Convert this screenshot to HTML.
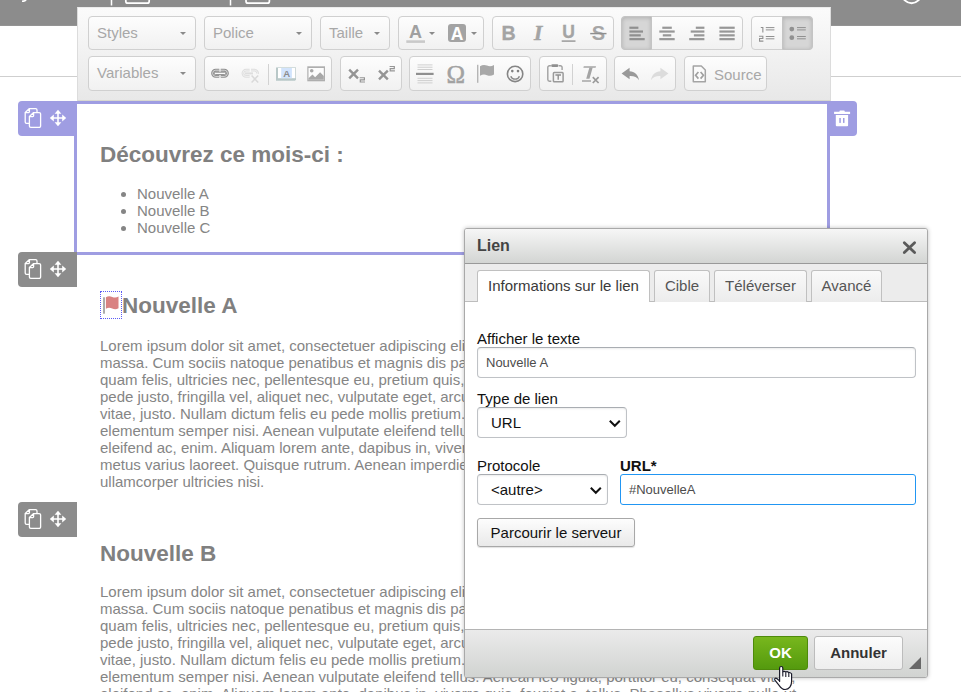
<!DOCTYPE html>
<html lang="fr">
<head>
<meta charset="utf-8">
<title>Lien</title>
<style>
*{box-sizing:border-box}
html,body{margin:0;padding:0}
body{width:961px;height:692px;overflow:hidden;position:relative;background:#fff;font-family:"Liberation Sans",sans-serif;font-size:15px;color:#858585}
.abs{position:absolute}
#topbar{left:0;top:0;width:961px;height:26px;background:#8c8c8c;border-bottom:1px solid #949494}
#hr{left:0;top:76px;width:961px;height:1px;background:#cfcfcf}
/* toolbar */
#tb{left:77px;top:7px;width:754px;height:94px;background:linear-gradient(#fbfbfb,#e8e8e8);border:1px solid #dcdcdc;border-top-color:#ececec;border-bottom-color:#d8d8d0}
.grp{position:absolute;height:34px;border:1px solid #d0d0d0;border-radius:4px;background:linear-gradient(#fdfdfd,#f1f1f1)}
.combo{position:absolute;font-size:15px;color:#a8a8a8;line-height:34px;white-space:nowrap}
.act{position:absolute;background:#d6d6d6;border:1px solid #c4c4c4;box-shadow:inset 0 1px 4px rgba(0,0,0,.18)}
.sep{position:absolute;width:1px;height:21px;background:#d2d2d2}
.arr{position:absolute;width:0;height:0;border-left:3px solid transparent;border-right:3px solid transparent;border-top:3px solid #8a8a8a}
/* handles */
.handle{width:59px;height:35px;border-radius:4px 0 0 4px}
.lav{background:#9f9de2}
.gry{background:#8c8c8c}
#editor{left:74px;top:101px;width:756px;height:154px;border:3px solid #9f9de2;background:#fff}
#trash{left:827px;top:101px;width:30px;height:35px;border-radius:0 4px 4px 0}
h2{position:absolute;margin:0;font-size:22.5px;font-weight:bold;color:#808080;white-space:nowrap;line-height:26px}
.p{position:absolute;left:100px;white-space:nowrap;line-height:17px;color:#858585}
ul{position:absolute;margin:0;padding:0;left:137px;top:185px;line-height:17px;list-style:none}
ul li{position:relative}
ul li:before{content:"";position:absolute;left:-16px;top:7px;width:5px;height:5px;border-radius:50%;background:#858585}
/* dialog */
#dlg{left:464px;top:228px;width:464px;height:450px;border:1px solid #a9a9a9;border-radius:3px;background:#fff;box-shadow:0 0 4px rgba(0,0,0,.25);color:#111}
#dtitle{left:0;top:0;width:462px;height:35px;background:linear-gradient(#f6f6f6,#d3d5d3);border-bottom:1px solid #999;border-radius:2px 2px 0 0;font-weight:bold;font-size:16px;color:#444;line-height:33px;padding-left:12px}
#dtabs{left:0;top:35px;width:462px;height:38px;background:#ececec;border-bottom:1px solid #bdbdbd}
.tab{position:absolute;top:6px;height:32px;border:1px solid #c0c0c0;border-bottom:none;border-radius:3px 3px 0 0;background:linear-gradient(#f9f9f9,#ececec);font-size:15px;color:#555;line-height:30px;text-align:center}
.tab.sel{background:#fff;color:#3a3a3a;height:32px;box-shadow:0 1px 0 #fff}
.lbl{position:absolute;font-size:15px;color:#111;line-height:17px;white-space:nowrap}
.inp{position:absolute;height:31px;border:1px solid #bfc2c6;border-top-color:#a9adb2;border-radius:4px;background:#fff;font-size:13px;color:#4c4c4c;line-height:29px;padding-left:8px;box-shadow:inset 0 1px 2px rgba(0,0,0,.08)}
.sel2{position:absolute;height:31px;border:1px solid #bfc2c6;border-top-color:#a9adb2;box-shadow:inset 0 1px 2px rgba(0,0,0,.08);border-radius:4px;background:#fff;font-size:15px;color:#111;line-height:29px;padding-left:13px}
#dfoot{left:0;top:400px;width:462px;height:48px;background:linear-gradient(#ebebeb,#d1d3d1);border-top:1px solid #b4b4b4;border-radius:0 0 2px 2px}
.chev{position:absolute;right:4px;top:11px}
.btn{position:absolute;height:34px;border-radius:3px;font-weight:bold;font-size:15px;text-align:center;line-height:32px}
</style>
</head>
<body>
<div id="topbar" class="abs"></div><svg class="abs" style="left:0;top:0" width="961" height="25" viewBox="0 0 961 25"><g fill="none" stroke="#fff" stroke-width="1.700"><path d="M111.500 -1v6.500M230.500 -1v6.500" stroke-width="1.500"/><rect x="125.800" y="-10" width="23.400" height="13.200" rx="2"/><rect x="246" y="-10" width="23.400" height="13.200" rx="2"/><circle cx="911.600" cy="-6.300" r="9.500" stroke-width="2"/><path d="M26 -1q0 2.200-4 2.200" stroke-width="1.600"/></g></svg>
<div id="hr" class="abs"></div>

<!-- page content -->
<div class="abs handle lav" style="left:18px;top:101px"></div><svg class="abs" style="left:18px;top:101px" width="59" height="35" viewBox="0 0 59 35"><g fill="none" stroke="#fff" stroke-width="1.300" stroke-linejoin="round"><path d="M11.600 7.600h6a1.400 1.400 0 0 1 1.400 1.400v2.400M11.200 22.400h-2.600a1.400 1.400 0 0 1-1.400-1.400v-9.600l4.200-3.800v3.200a.8.800 0 0 1-.8.800h-3.200"/><path d="M15.600 11.600h5.600a1.400 1.400 0 0 1 1.400 1.400v12a1.400 1.400 0 0 1-1.400 1.400h-8.400a1.400 1.400 0 0 1-1.400-1.400v-9.600l4.200-3.800v3.200a.8.800 0 0 1-.8.800h-3.200"/></g><path d="M40 8.800l3.400 4h-2.600v3.400h3.400v-2.600l4 3.400-4 3.400v-2.600h-3.400v3.400h2.600l-3.400 4-3.400-4h2.600v-3.400h-3.400v2.600l-4-3.400 4-3.400v2.600h3.400v-3.400h-2.600z" fill="#fff"/></svg>
<div class="abs lav" id="trash"></div><svg class="abs" style="left:827px;top:101px" width="30" height="35" viewBox="0 0 30 35"><path d="M7.100 10.800h5.200l.6-1.400h4.400l.6 1.400h5.200v2.200h-16zM8.800 13.900h12.300v10.300a1 1 0 0 1-1 1h-10.300a1 1 0 0 1-1-1z" fill="#fff"/><rect x="12.300" y="17" width="1.500" height="4.900" fill="#9f9de2"/><rect x="16" y="17" width="1.500" height="4.900" fill="#9f9de2"/></svg>
<div id="editor" class="abs"></div>
<h2 style="left:100px;top:142px">Découvrez ce mois-ci :</h2>
<ul><li>Nouvelle A</li><li>Nouvelle B</li><li>Nouvelle C</li></ul>

<div class="abs handle gry" style="left:18px;top:252px"></div><svg class="abs" style="left:18px;top:252px" width="59" height="35" viewBox="0 0 59 35"><g fill="none" stroke="#fff" stroke-width="1.300" stroke-linejoin="round"><path d="M11.600 7.600h6a1.400 1.400 0 0 1 1.400 1.400v2.400M11.200 22.400h-2.600a1.400 1.400 0 0 1-1.400-1.400v-9.600l4.200-3.800v3.200a.8.800 0 0 1-.8.800h-3.200"/><path d="M15.600 11.600h5.600a1.400 1.400 0 0 1 1.400 1.400v12a1.400 1.400 0 0 1-1.400 1.400h-8.400a1.400 1.400 0 0 1-1.400-1.400v-9.600l4.200-3.800v3.200a.8.800 0 0 1-.8.800h-3.200"/></g><path d="M40 8.800l3.400 4h-2.600v3.400h3.400v-2.600l4 3.400-4 3.400v-2.600h-3.400v3.400h2.600l-3.400 4-3.400-4h2.600v-3.400h-3.400v2.600l-4-3.400 4-3.400v2.600h3.400v-3.400h-2.600z" fill="#fff"/></svg>
<!--ANCHOR--><div class="abs" style="left:100px;top:291px;width:22px;height:28px;border:1px dotted #5c5cf6"></div><svg class="abs" style="left:100px;top:291px" width="22" height="28" viewBox="0 0 22 28"><rect x="3.100" y="6.300" width="1.800" height="16.400" fill="#a3a3a3"/><path d="M5.900 6.200c2.200-1.300 4.200-1.100 6.300-.3s4.100 1 6.300-.3v11.600c-2.200 1.300-4.200 1.100-6.300.3s-4.100-1-6.300.3z" fill="#d98282"/></svg><h2 style="left:122px;top:293px">Nouvelle A</h2>
<div class="p" style="top:337px">Lorem ipsum dolor sit amet, consectetuer adipiscing elit. Aenean commodo ligula eget dolor. Aenean<br>massa. Cum sociis natoque penatibus et magnis dis parturient montes, nascetur ridiculus mus. Donec<br>quam felis, ultricies nec, pellentesque eu, pretium quis, sem. Nulla consequat massa quis enim. Donec<br>pede justo, fringilla vel, aliquet nec, vulputate eget, arcu. In enim justo, rhoncus ut, imperdiet a, venenatis<br>vitae, justo. Nullam dictum felis eu pede mollis pretium. Integer tincidunt. Cras dapibus. Vivamus<br>elementum semper nisi. Aenean vulputate eleifend tellus. Aenean leo ligula, porttitor eu, consequat vitae,<br>eleifend ac, enim. Aliquam lorem ante, dapibus in, viverra quis, feugiat a, tellus. Phasellus viverra nulla ut<br>metus varius laoreet. Quisque rutrum. Aenean imperdiet. Etiam ultricies nisi vel augue. Curabitur<br>ullamcorper ultricies nisi.</div>

<div class="abs handle gry" style="left:18px;top:502px"></div><svg class="abs" style="left:18px;top:502px" width="59" height="35" viewBox="0 0 59 35"><g fill="none" stroke="#fff" stroke-width="1.300" stroke-linejoin="round"><path d="M11.600 7.600h6a1.400 1.400 0 0 1 1.400 1.400v2.400M11.200 22.400h-2.600a1.400 1.400 0 0 1-1.400-1.400v-9.600l4.200-3.800v3.200a.8.800 0 0 1-.8.800h-3.200"/><path d="M15.600 11.600h5.600a1.400 1.400 0 0 1 1.400 1.400v12a1.400 1.400 0 0 1-1.400 1.400h-8.400a1.400 1.400 0 0 1-1.400-1.400v-9.600l4.200-3.800v3.200a.8.800 0 0 1-.8.800h-3.200"/></g><path d="M40 8.800l3.400 4h-2.600v3.400h3.400v-2.600l4 3.400-4 3.400v-2.600h-3.400v3.400h2.600l-3.400 4-3.400-4h2.600v-3.400h-3.400v2.600l-4-3.400 4-3.400v2.600h3.400v-3.400h-2.600z" fill="#fff"/></svg>
<h2 style="left:100px;top:541px">Nouvelle B</h2>
<div class="p" style="top:583px">Lorem ipsum dolor sit amet, consectetuer adipiscing elit. Aenean commodo ligula eget dolor. Aenean<br>massa. Cum sociis natoque penatibus et magnis dis parturient montes, nascetur ridiculus mus. Donec<br>quam felis, ultricies nec, pellentesque eu, pretium quis, sem. Nulla consequat massa quis enim. Donec<br>pede justo, fringilla vel, aliquet nec, vulputate eget, arcu. In enim justo, rhoncus ut, imperdiet a, venenatis<br>vitae, justo. Nullam dictum felis eu pede mollis pretium. Integer tincidunt. Cras dapibus. Vivamus<br>elementum semper nisi. Aenean vulputate eleifend tellus. Aenean leo ligula, porttitor eu, consequat vitae,<br>eleifend ac, enim. Aliquam lorem ante, dapibus in, viverra quis, feugiat a, tellus. Phasellus viverra nulla ut<br>metus varius laoreet. Quisque rutrum. Aenean imperdiet. Etiam ultricies nisi vel augue. Curabitur</div>

<!-- toolbar -->
<div id="tb" class="abs">
<div class="grp" style="left:10px;top:8px;width:108px;height:34px"></div>
<div class="grp" style="left:126px;top:8px;width:108px;height:34px"></div>
<div class="grp" style="left:242px;top:8px;width:70px;height:34px"></div>
<div class="grp" style="left:320px;top:8px;width:86px;height:34px"></div>
<div class="grp" style="left:414px;top:8px;width:122px;height:34px"></div>
<div class="grp" style="left:543px;top:8px;width:122px;height:34px"></div>
<div class="grp" style="left:673px;top:8px;width:62px;height:34px"></div>
<div class="grp" style="left:10px;top:48px;width:108px;height:35px"></div>
<div class="grp" style="left:126px;top:48px;width:128px;height:35px"></div>
<div class="grp" style="left:262px;top:48px;width:62px;height:35px"></div>
<div class="grp" style="left:331px;top:48px;width:122px;height:35px"></div>
<div class="grp" style="left:461px;top:48px;width:68px;height:35px"></div>
<div class="grp" style="left:536px;top:48px;width:62px;height:35px"></div>
<div class="grp" style="left:606px;top:48px;width:83px;height:35px"></div>
<div class="act" style="left:543px;top:8px;width:31px;height:34px;border-radius:4px 0 0 4px"></div>
<div class="act" style="left:704px;top:8px;width:31px;height:34px;border-radius:0 4px 4px 0"></div>
<div class="combo" style="left:19px;top:8px">Styles</div>
<div class="combo" style="left:135px;top:8px">Police</div>
<div class="combo" style="left:251px;top:8px">Taille</div>
<div class="combo" style="left:19px;top:48px">Variables</div>
<div class="combo" style="left:636px;top:50px">Source</div>
<div class="arr" style="left:102px;top:24px"></div>
<div class="arr" style="left:218px;top:24px"></div>
<div class="arr" style="left:296px;top:24px"></div>
<div class="arr" style="left:102px;top:64px"></div>
<div class="arr" style="left:351px;top:24px"></div>
<div class="arr" style="left:393px;top:24px"></div>
<div class="sep" style="left:190px;top:56px"></div>
<div class="sep" style="left:494px;top:56px"></div>
</div>
<svg id="icons" class="abs" style="left:0;top:0" width="961" height="110" viewBox="0 0 961 110"><!--ICONS-->
<g fill="#9a9a9a" stroke="none" font-family="Liberation Sans, sans-serif">
<!-- text color -->
<text x="415.4" y="38.2" font-size="18" font-weight="bold" text-anchor="middle" fill="#a0a0a0">A</text>
<rect x="406.3" y="40.3" width="18.7" height="2.6" fill="#c9c9c9"/>
<!-- bg color -->
<rect x="448" y="24" width="18" height="18" rx="3" fill="#a3a3a3"/>
<text x="457" y="39.6" font-size="17.5" font-weight="bold" text-anchor="middle" fill="#fff">A</text>
<!-- B I U S -->
<text x="508.7" y="40" font-size="19.6" font-weight="bold" text-anchor="middle" fill="#a4a4a4" stroke="#a4a4a4" stroke-width="0.300">B</text>
<text x="538.2" y="40" font-size="21.4" font-weight="bold" font-style="italic" font-family="Liberation Serif, serif" text-anchor="middle" fill="#a4a4a4" stroke="#a4a4a4" stroke-width="0.500">I</text>
<text x="568.5" y="38.2" font-size="17.5" font-weight="bold" text-anchor="middle" fill="#a4a4a4" stroke="#a4a4a4" stroke-width="0.300">U</text>
<rect x="561.7" y="40.3" width="13.8" height="1.6" fill="#a0a0a0"/>
<text x="598.4" y="40" font-size="20" font-weight="bold" text-anchor="middle" fill="#a6a6a6">S</text>
<rect x="590.2" y="32.9" width="16.3" height="1.4" fill="#8e8e8e"/>
</g>
<!-- align -->
<g fill="#8f8f8f">
<rect x="629.4" y="26.65" width="9" height="2.2"/><rect x="629.4" y="30.45" width="13.6" height="2.2"/><rect x="629.4" y="34.25" width="11.4" height="2.2"/><rect x="629.4" y="38.05" width="15.3" height="2.2"/>
</g>
<g fill="#979797">
<rect x="662.3" y="26.65" width="9.5" height="2.2"/><rect x="659.3" y="30.45" width="15.4" height="2.2"/><rect x="662.8" y="34.25" width="8.5" height="2.2"/><rect x="659.3" y="38.05" width="15.4" height="2.2"/>
<rect x="695.8" y="26.65" width="8.6" height="2.2"/><rect x="690.7" y="30.45" width="13.7" height="2.2"/><rect x="693.9" y="34.25" width="10.5" height="2.2"/><rect x="689.2" y="38.05" width="15.2" height="2.2"/>
<rect x="719.4" y="26.65" width="15.3" height="2.2"/><rect x="719.4" y="30.45" width="15.3" height="2.2"/><rect x="719.4" y="34.25" width="15.3" height="2.2"/><rect x="719.4" y="38.05" width="15.3" height="2.2"/>
</g>
<!-- lists -->
<g fill="#909090">
<rect x="765.8" y="27.1" width="8.6" height="1"/><rect x="765.8" y="29.4" width="8.6" height="1"/><rect x="765.8" y="36" width="8.6" height="1"/><rect x="765.8" y="38.3" width="8.6" height="1"/>
<path d="M760.8 27h2.6v5.4h-1.1v-4.3h-1.5z"/>
<path d="M759 35.7h4.4v3.4h-3.3v1.5h3.3v1.1H759v-3.7h3.3v-1.2H759z"/>
<rect x="797" y="27.1" width="8.8" height="1"/><rect x="797" y="29.4" width="8.8" height="1"/><rect x="797" y="36" width="8.8" height="1"/><rect x="797" y="38.3" width="8.8" height="1"/>
<circle cx="791.8" cy="29.1" r="2.4"/><circle cx="791.8" cy="37.7" r="2.4"/>
</g>
<!-- link -->
<g fill="none" stroke="#8e8e8e" stroke-width="2.9" stroke-linecap="butt">
<path d="M219.300 70.200h-3.600a3.100 3.100 0 0 0 0 6.200h3.600"/>
<path d="M220.700 70.200h3.600a3.100 3.100 0 0 1 0 6.200h-3.600"/>
</g>
<g fill="none" stroke="#e9e9e9" stroke-width="0.800">
<path d="M219.300 70.200h-3.600a3.100 3.100 0 0 0 0 6.200h3.600"/>
<path d="M220.700 70.200h3.600a3.100 3.100 0 0 1 0 6.200h-3.600"/>
</g>
<rect x="214.300" y="72.200" width="11.400" height="2.400" rx="1.200" fill="#fafafa" stroke="#808080" stroke-width="0.900"/>
<!-- unlink -->
<g fill="none" stroke="#dedede" stroke-width="2.700">
<path d="M249.600 70.200h-3.600a3.100 3.100 0 0 0 0 6.200h3.600"/>
<path d="M251 70.200h3.600a3.100 3.100 0 0 1 3 3.600"/>
<path d="M245 73.400h8" stroke-width="2"/>
</g>
<g fill="none" stroke="#f6f6f6" stroke-width="0.700">
<path d="M249.600 70.200h-3.600a3.100 3.100 0 0 0 0 6.200h3.600"/>
<path d="M251 70.200h3.600a3.100 3.100 0 0 1 3 3.600"/>
</g>
<path d="M251.600 75.600l6.600 6.800M258.200 75.600l-6.600 6.800" stroke="#d9d9d9" stroke-width="1.500" fill="none"/>
<!-- textfield A -->
<path d="M277 67h19v12.800l-1 1h-19v-12.800z" fill="#b9c8c8"/>
<rect x="276.800" y="67" width="19.200" height="1" fill="#d3dddd"/>
<rect x="278" y="68" width="17.300" height="10.200" fill="#fff"/>
<rect x="281.200" y="68" width="10.700" height="10.200" fill="#d2e4fc"/>
<text x="286.650" y="76.900" font-size="9.600" font-weight="bold" text-anchor="middle" fill="#8c8c8c" font-family="Liberation Sans, sans-serif">A</text>
<!-- image -->
<rect x="307.300" y="66.300" width="17.700" height="15" fill="#aeaeae"/>
<rect x="308.500" y="68" width="15.300" height="11.800" fill="#fcfcfc"/>
<circle cx="311.700" cy="70.800" r="1.800" fill="#a8a8a8"/>
<path d="M308.500 79.800v-1.600l4-3.600 2.600 2.600 5-5 3.700 3.800v3.800z" fill="#a8a8a8"/>
<!-- sub / sup -->
<g stroke="#959595" stroke-width="2.4" fill="none">
<path d="M349.2 69.6l8.8 8.8M358 69.6l-8.8 8.8"/>
<path d="M379 70.6l8.8 8.8M387.8 70.6l-8.8 8.8"/>
</g>
<g fill="#959595">
<path d="M359.7 77.2h5.3v3.2h-4.1v1.1h4.1v1.1h-5.3v-3.3h4.1v-1h-4.1z"/>
<path d="M389.6 66h5.3v3.2h-4.1v1.1h4.1v1.1h-5.3v-3.3h4.1v-1h-4.1z"/>
</g>
<!-- hr -->
<g fill="#cfcfcf">
<rect x="417.5" y="64.4" width="15" height="1"/><rect x="417.5" y="66.7" width="15" height="1"/><rect x="417.5" y="69" width="15" height="1"/>
<rect x="417.5" y="77.8" width="15" height="1"/><rect x="417.5" y="80.1" width="15" height="1"/><rect x="417.5" y="82.4" width="15" height="1"/>
</g>
<rect x="416" y="72.8" width="17.6" height="2.2" fill="#8f8f8f"/>
<!-- omega -->
<text x="455.8" y="82.7" font-size="25" text-anchor="middle" fill="#a2a2a2" stroke="#a2a2a2" stroke-width="0.500" font-family="Liberation Serif, serif">Ω</text>
<!-- flag -->
<rect x="477" y="64.8" width="1.4" height="18" fill="#b5b5b5"/>
<path d="M480 66.2c2.6-1.6 5 -1.4 7 -.6s4.4 1 7-.6v9.6c-2.600 1.600-5 1.400-7 .6s-4.400-1-7 .6z" fill="#a8a8a8"/>
<!-- smiley -->
<circle cx="515.100" cy="73.900" r="7.700" fill="none" stroke="#858585" stroke-width="1.600"/>
<circle cx="512.300" cy="71.100" r="1.300" fill="#808080"/><circle cx="518" cy="71.100" r="1.300" fill="#808080"/>
<path d="M510.800 76.200a4.600 4.600 0 0 0 8.600 0" fill="none" stroke="#858585" stroke-width="1.400"/>
<!-- paste text -->
<g fill="none" stroke="#a0a0a0" stroke-width="1.400">
<path d="M551.300 81.200h-1.800a1.700 1.700 0 0 1-1.700-1.700v-12a1.700 1.700 0 0 1 1.700-1.700h1.400M558.800 65.800h1.600a1.700 1.700 0 0 1 1.700 1.700v2.600"/>
<rect x="553.400" y="72.600" width="9.700" height="9.200" rx="0.800" stroke="#9a9a9a" stroke-width="1.500"/>
</g>
<rect x="551.200" y="64.300" width="7.200" height="2.700" rx="1.300" fill="#8f8f8f"/>
<path d="M555.400 74.300h5.600v1.400h-2.100v4.100h-1.400v-4.100h-2.100z" fill="#909090"/>
<!-- remove format -->
<path d="M583.800 66.200h12.200l-.4 1.500h-12.200z" fill="#a4a4a4"/>
<path d="M589.400 67.400h3.300l-3.200 11.300h-3.300z" fill="#a4a4a4"/>
<rect x="582" y="80.300" width="9" height="1.400" fill="#a0a0a0"/>
<path d="M592.800 77.200l5.800 5.800M598.600 77.200l-5.800 5.800" stroke="#9a9a9a" stroke-width="1.700" fill="none"/>
<!-- undo / redo -->
<path d="M621.600 73.400l8-5.600v3.400c5 .2 8.600 3.200 9.400 9-2-3.200-5-4.400-9.400-4.200v3.200z" fill="#999"/>
<path d="M668.400 73.400l-8-5.600v3.400c-5 .2-8.600 3.200-9.400 9 2-3.200 5-4.400 9.400-4.200v3.200z" fill="#dcdcdc"/>
<!-- source -->
<path d="M693.300 66h8l4 4v11.800h-12z" fill="#fbfbfb" stroke="#a4a4a4" stroke-width="1.500" stroke-linejoin="round"/>
<path d="M698.400 72l-2.800 3.300 2.800 3.300M700.600 72l2.800 3.300-2.800 3.300" fill="none" stroke="#a0a0a0" stroke-width="1.700"/>
</svg>

<!-- dialog -->
<div id="dlg" class="abs">
  <div id="dtitle" class="abs">Lien</div>
  <svg class="abs" style="left:430px;top:5px" width="26" height="26" viewBox="0 0 26 26"><path d="M9.300 8.800l10.300 9.800M19.600 8.800l-10.300 9.800" stroke="#5a5a5a" stroke-width="2.800" stroke-linecap="round" fill="none"/></svg>
  <div id="dtabs" class="abs">
    <div class="tab sel" style="left:12px;width:173px">Informations sur le lien</div>
    <div class="tab" style="left:189px;width:56px">Cible</div>
    <div class="tab" style="left:249px;width:93px">Téléverser</div>
    <div class="tab" style="left:346px;width:71px">Avancé</div>
  </div>
  <div class="lbl" style="left:12px;top:101px">Afficher le texte</div>
  <div class="inp" style="left:12px;top:118px;width:439px">Nouvelle A</div>
  <div class="lbl" style="left:12px;top:161px">Type de lien</div>
  <div class="sel2" style="left:12px;top:178px;width:150px">URL<svg class="chev" width="14" height="10" viewBox="0 0 14 10"><path d="M1.800 1.800l5 5 5-5" fill="none" stroke="#111" stroke-width="2"/></svg></div>
  <div class="lbl" style="left:12px;top:228px">Protocole</div>
  <div class="sel2" style="left:12px;top:245px;width:131px">&lt;autre&gt;<svg class="chev" width="14" height="10" viewBox="0 0 14 10"><path d="M1.800 1.800l5 5 5-5" fill="none" stroke="#111" stroke-width="2"/></svg></div>
  <div class="lbl" style="left:155px;top:228px;font-weight:bold">URL*</div>
  <div class="inp" style="left:155px;top:245px;width:296px;border-color:#2196f3;border-radius:3px;box-shadow:none">#NouvelleA</div>
  <div class="sel2" style="left:12px;top:289px;width:158px;height:29px;background:linear-gradient(#fdfdfd,#e9e9e9);padding:0;text-align:center;line-height:28px;border-color:#a8a8a8;border-radius:3px;box-shadow:0 1px 1px rgba(0,0,0,.12)">Parcourir le serveur</div>
  <div id="dfoot" class="abs">
    <div class="btn" style="left:288px;top:6px;width:55px;background:linear-gradient(#78b71d,#549a0e);color:#fff;border:1px solid #4e8a0b">OK</div>
    <div class="btn" style="left:349px;top:6px;width:89px;background:linear-gradient(#fcfcfc,#eee);color:#333;border:1px solid #bcbcbc">Annuler</div>
    <svg class="abs" style="left:443px;top:26px" width="14" height="14" viewBox="0 0 14 14"><path d="M13 1v12h-12z" fill="#686868"/></svg>
  </div>
</div>
<!--CURSOR--><svg class="abs" style="left:0;top:660px" width="961" height="32" viewBox="0 660 961 32"><path d="M779.600 681.500V668.100a1.600 1.600 0 0 1 3.200 0V671.800q1.500-1 3 .2q1.500-.8 3 .6q1.600-.4 2.800 1.200V681.500c0 4.500-2.500 8-6.500 8c-3 0-4.500-2-6-4.200l-4.200-5.200c-.8-1.200.6-2.400 1.800-1.600l2.900 2.400z" fill="#fff" stroke="#1b1b2b" stroke-width="1.200" stroke-linejoin="round"/><path d="M782.800 671.800V676.600M785.800 672.200V676.900M788.800 672.800V677.100" stroke="#1b1b2b" stroke-width="1.100" fill="none"/></svg>
</body>
</html>
